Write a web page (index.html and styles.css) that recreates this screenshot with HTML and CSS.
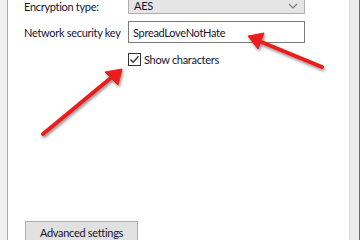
FILE: index.html
```html
<!DOCTYPE html>
<html lang="en">
<head>
    <meta charset="UTF-8">
    <title>Wireless Network Properties</title>
    <link rel="stylesheet" href="styles.css">
</head>
<body>
    <!-- Janela de propriedades da rede, com anotações -->
    <div class="window">
        <div class="edge-left"></div>

        <div class="panel">
            <div class="form">
                <div class="row">
                    <span class="label">Encryption type:</span>
                    <div class="select">
                        <span>AES</span>
                        <svg class="chevron" width="10" height="6" viewBox="0 0 10 6">
                            <path d="M1 1 L5 5 L9 1" fill="none" stroke="#7a7a7a" stroke-width="1.2"/>
                        </svg>
                    </div>
                </div>
                <div class="row">
                    <span class="label">Network security key</span>
                    <div class="input">SpreadLoveNotHate</div>
                </div>
                <div class="row">
                    <span class="label"></span>
                    <label class="check">
                        <span class="box">
                            <svg width="11" height="11" viewBox="0 0 11 11">
                                <path d="M1.5 5.5 L4.2 8.3 L9.5 2.2" fill="none" stroke="#333" stroke-width="1.3"/>
                            </svg>
                        </span>
                        Show characters
                    </label>
                </div>
            </div>

            <div class="footer">
                <button>Advanced settings</button>
            </div>
        </div>

        <div class="edge-right"></div>
    </div>

    <!-- Setas vermelhas desenhadas por cima da captura -->
    <svg class="arrows" width="360" height="240" viewBox="0 0 360 240">
        <defs>
            <filter id="shadow" x="-20%" y="-20%" width="140%" height="140%">
                <feDropShadow dx="1" dy="2" stdDeviation="1.5" flood-color="#000" flood-opacity="0.45"/>
            </filter>
        </defs>
        <g filter="url(#shadow)" fill="#ec1c1c" stroke="#ec1c1c">
            <line x1="322" y1="67" x2="259" y2="41" stroke-width="4" stroke-linecap="round"/>
            <polygon points="248,36 264,33 258,49" stroke-width="1" stroke-linejoin="round"/>
            <line x1="43" y1="134" x2="112" y2="77" stroke-width="4" stroke-linecap="round"/>
            <polygon points="122,69 118,85 105,72" stroke-width="1" stroke-linejoin="round"/>
        </g>
    </svg>
</body>
</html>
```

FILE: styles.css
```css
body {
    margin: 0;
    width: 360px;
    height: 240px;
    overflow: hidden;
    font-family: 'Lato', 'Noto Sans', sans-serif;
    font-size: 11px;
    letter-spacing: -0.3px;
    color: #15152e;
    background-color: #fff;
}

.window {
    display: flex;
    height: 240px;
}

.edge-left {
    width: 7px;
    background-color: #f0f0f0;
    border-right: 1px solid #a8a8a8;
}

.panel {
    flex: 1;
    display: flex;
    flex-direction: column;
    justify-content: space-between;
    background-color: #fff;
}

.edge-right {
    width: 9px;
    background-color: #ebebeb;
    border-left: 1px solid #dcdcdc;
    border-right: 1px solid #6a6a6a;
}

.form {
    margin-top: -2px;
    padding-left: 16px;
}

.row {
    display: flex;
    align-items: center;
    margin-bottom: 7px;
    white-space: nowrap;
}

.label {
    width: 104px;
}

.select {
    height: 16px;
    display: flex;
    align-items: center;
    justify-content: space-between;
    padding: 0 6px 0 5px;
    box-sizing: border-box;
    width: 177px;
    background-color: #e5e5e5;
    border: 1px solid #adadad;
    border-top: none;
}

.input {
    width: 177px;
    height: 22px;
    box-sizing: border-box;
    display: flex;
    align-items: center;
    padding-left: 4px;
    border: 1px solid #7a7a7a;
    background-color: #fff;
}

.check {
    display: flex;
    align-items: center;
    gap: 3px;
    margin-top: 3px;
}

.box {
    width: 11px;
    height: 11px;
    border: 1px solid #333;
    display: flex;
}

.footer {
    padding-left: 17px;
}

button {
    width: 113px;
    height: 22px;
    font-family: inherit;
    font-size: 11px;
    letter-spacing: -0.3px;
    color: #15152e;
    background-color: #e1e1e1;
    border: 1px solid #adadad;
    margin-bottom: -3px;
    padding: 0;
}

.arrows {
    position: absolute;
    left: 0;
    top: 0;
}
```
